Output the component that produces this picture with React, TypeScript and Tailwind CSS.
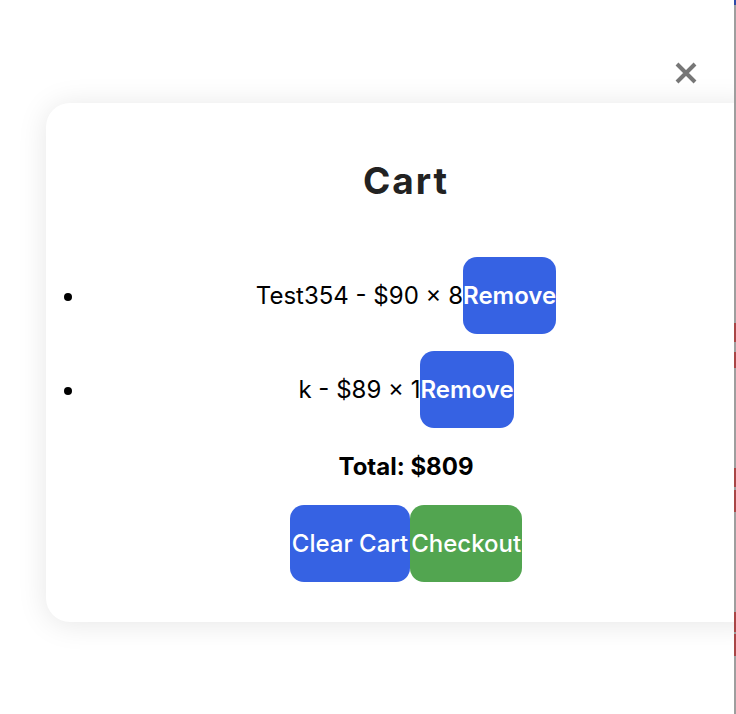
import { useState } from 'react'

type CartItem = {
    id: number
    name: string
    price: number
    quantity: number
}

const initialItems: CartItem[] = [
    { id: 1, name: 'Test354', price: 90, quantity: 8 },
    { id: 2, name: 'k', price: 89, quantity: 1 },
]

// red marks on the edge strip, [height, gapBefore]
const marks = [
    [19, 323],
    [16, 10],
    [19, 100],
    [22, 3],
    [20, 100],
    [22, 2],
]

export default function App() {
    const [items, setItems] = useState(initialItems)

    const total = items.reduce((sum, i) => sum + i.price * i.quantity, 0)

    return (
        <div className="flex h-[714px] w-full overflow-hidden bg-white font-['Inter',sans-serif]">
            <div className="flex min-w-0 flex-1 flex-col overflow-hidden">
                <div className="flex justify-end pt-[61px] pr-[36px]">
                    <button aria-label="Close" className="h-6 w-6">
                        <svg viewBox="0 0 24 24" className="h-6 w-6" fill="none" stroke="#777777" strokeWidth="4">
                            <path d="M3 3 L21 21 M21 3 L3 21" />
                        </svg>
                    </button>
                </div>

                <div className="mt-[18px] ml-[46px] w-[720px] shrink-0 rounded-[24px] bg-white p-10 shadow-[0_2px_30px_rgba(0,0,0,0.1)]">
                    <h2 className="mt-[18px] text-center text-[37px] leading-[40px] font-bold tracking-[2px] text-[#222222]">
                        Cart
                    </h2>

                    <ul className="mt-[56px] flex list-outside list-disc flex-col gap-[17px] pl-0">
                        {items.map(item => (
                            <li key={item.id} className="text-center text-[24px] leading-[77px] text-black">
                                {item.name} - ${item.price} × {item.quantity}
                                <button
                                    onClick={() => setItems(prev => prev.filter(i => i.id !== item.id))}
                                    className="inline-block h-[77px] rounded-[14px] bg-[#3662e3] px-0 align-top text-[24px] leading-[77px] font-semibold text-white"
                                >
                                    Remove
                                </button>
                            </li>
                        ))}
                    </ul>

                    <p className="mt-[27px] text-center text-[24px] leading-[24px] font-bold text-black">
                        Total: ${total}
                    </p>

                    <div className="mt-[26px] flex justify-center">
                        <button
                            onClick={() => setItems([])}
                            className="h-[77px] rounded-[14px] bg-[#3662e3] px-[2px] text-[24px] font-medium text-white"
                        >
                            Clear Cart
                        </button>
                        <button className="h-[77px] rounded-[14px] bg-[#52a550] px-[1px] text-[24px] font-medium text-white">
                            Checkout
                        </button>
                    </div>
                </div>
            </div>

            <div className="flex w-[2px] shrink-0 flex-col bg-[#9e9e9e]">
                <div className="h-[5px] bg-[#2c4aa8]" />
                {marks.map(([h, gap], idx) => (
                    <div key={idx} className="bg-[#a84646]" style={{ height: h, marginTop: idx === 0 ? gap - 5 : gap }} />
                ))}
            </div>
        </div>
    )
}
